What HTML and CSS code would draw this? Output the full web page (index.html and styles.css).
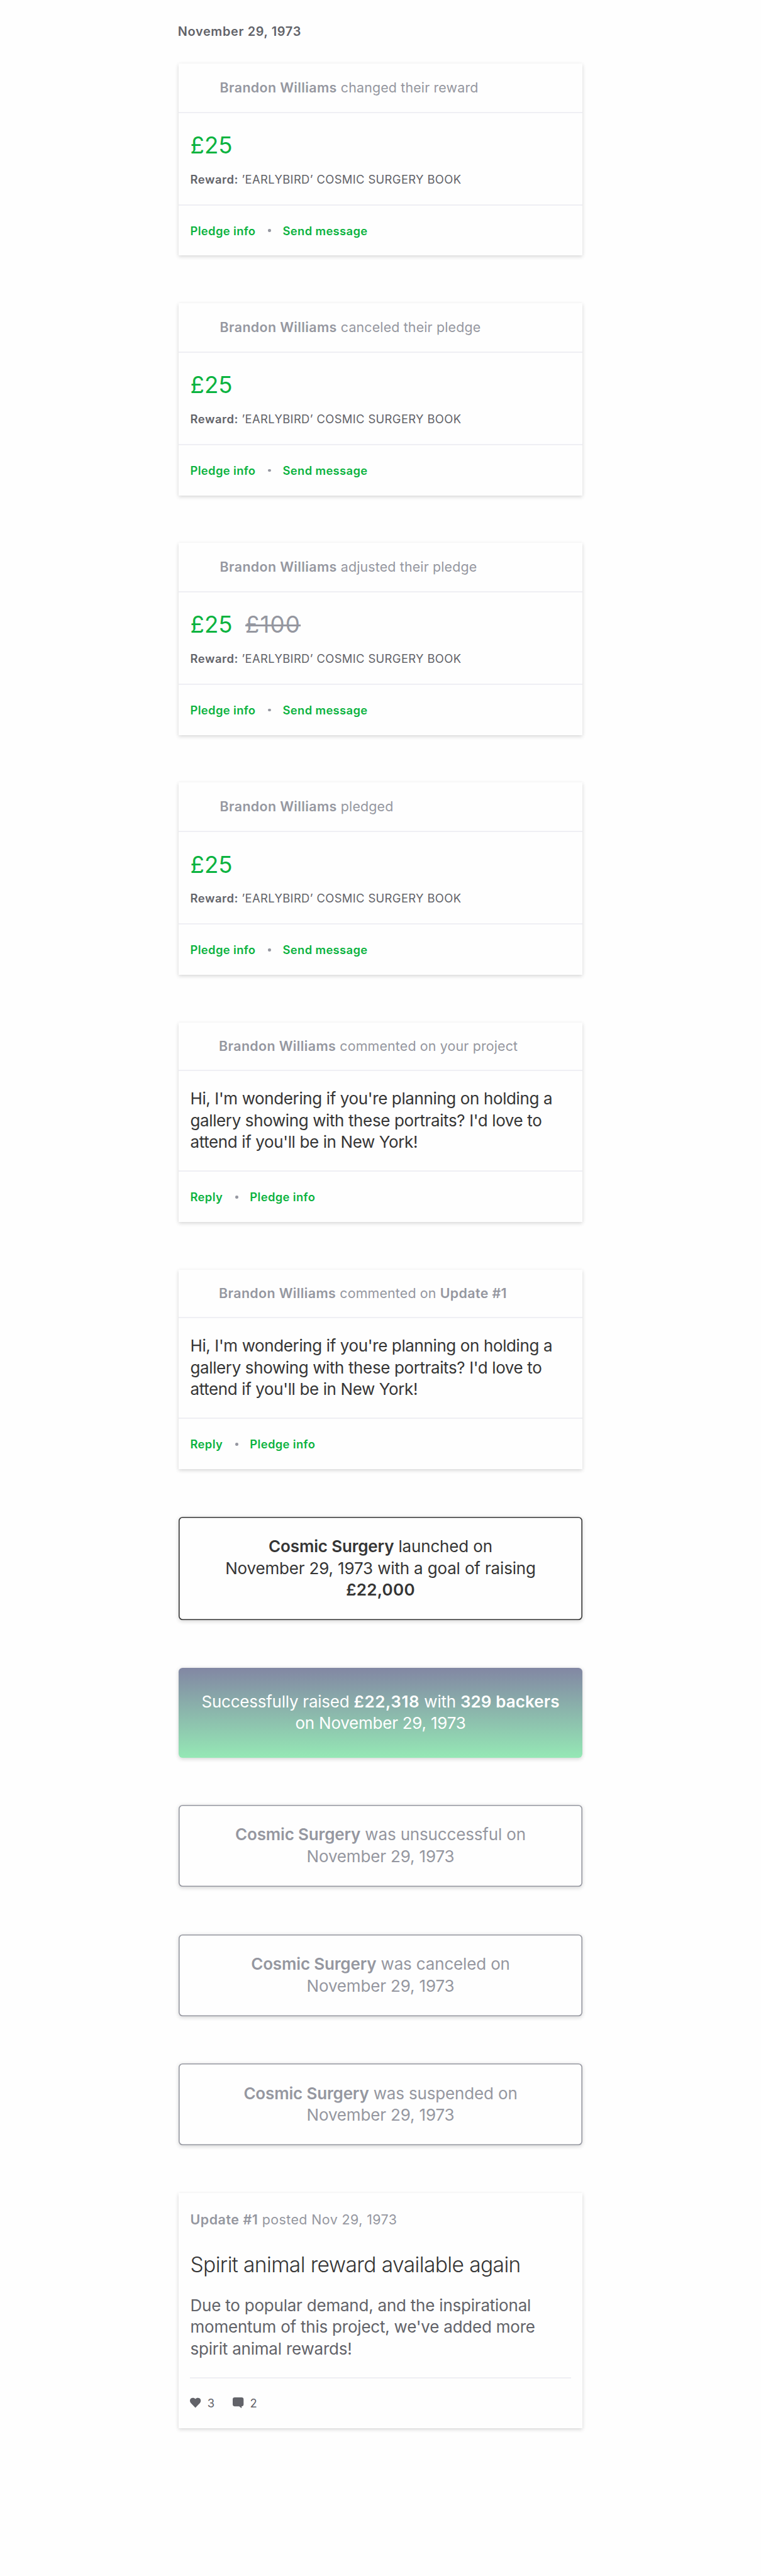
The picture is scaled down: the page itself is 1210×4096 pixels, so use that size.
FILE: index.html
```html
<!DOCTYPE html>
<html lang="en">
<head>
<meta charset="utf-8">
<title>Project activity</title>
<link rel="stylesheet" href="styles.css">
</head>
<body>
<main class="feed">
  <h1 class="date">November 29, 1973</h1>

  <article class="card">
    <header class="card-head"><strong>Brandon Williams</strong> changed their reward</header>
    <div class="pledge">
      <p class="amounts"><span class="amount">£25</span></p>
      <p class="reward"><strong>Reward:</strong> <span>’EARLYBIRD’ COSMIC SURGERY BOOK</span></p>
    </div>
    <footer class="actions"><a>Pledge info</a><i class="dot"></i><a>Send message</a></footer>
  </article>

  <article class="card">
    <header class="card-head"><strong>Brandon Williams</strong> canceled their pledge</header>
    <div class="pledge">
      <p class="amounts"><span class="amount">£25</span></p>
      <p class="reward"><strong>Reward:</strong> <span>’EARLYBIRD’ COSMIC SURGERY BOOK</span></p>
    </div>
    <footer class="actions"><a>Pledge info</a><i class="dot"></i><a>Send message</a></footer>
  </article>

  <article class="card">
    <header class="card-head"><strong>Brandon Williams</strong> adjusted their pledge</header>
    <div class="pledge">
      <p class="amounts"><span class="amount">£25</span><s class="old">£100</s></p>
      <p class="reward"><strong>Reward:</strong> <span>’EARLYBIRD’ COSMIC SURGERY BOOK</span></p>
    </div>
    <footer class="actions"><a>Pledge info</a><i class="dot"></i><a>Send message</a></footer>
  </article>

  <article class="card">
    <header class="card-head"><strong>Brandon Williams</strong> pledged</header>
    <div class="pledge">
      <p class="amounts"><span class="amount">£25</span></p>
      <p class="reward"><strong>Reward:</strong> <span>’EARLYBIRD’ COSMIC SURGERY BOOK</span></p>
    </div>
    <footer class="actions"><a>Pledge info</a><i class="dot"></i><a>Send message</a></footer>
  </article>

  <article class="card">
    <header class="card-head comment-head"><strong>Brandon Williams</strong> commented on your project</header>
    <p class="comment">Hi, I'm wondering if you're planning on holding a<br>gallery showing with these portraits? I'd love to<br>attend if you'll be in New York!</p>
    <footer class="actions"><a>Reply</a><i class="dot"></i><a>Pledge info</a></footer>
  </article>

  <article class="card">
    <header class="card-head comment-head"><strong>Brandon Williams</strong> commented on <strong>Update #1</strong></header>
    <p class="comment">Hi, I'm wondering if you're planning on holding a<br>gallery showing with these portraits? I'd love to<br>attend if you'll be in New York!</p>
    <footer class="actions"><a>Reply</a><i class="dot"></i><a>Pledge info</a></footer>
  </article>

  <article class="notice launched"><strong>Cosmic Surgery</strong> launched on<br>November 29, 1973 with a goal of raising<br><strong class="goal">£22,000</strong></article>
  <article class="notice success">Successfully raised <strong class="raised">£22,318</strong> with <strong class="backers">329 backers</strong><br>on November 29, 1973</article>
  <article class="notice"><strong>Cosmic Surgery</strong> was unsuccessful on<br>November 29, 1973</article>
  <article class="notice"><strong>Cosmic Surgery</strong> was canceled on<br>November 29, 1973</article>
  <article class="notice"><strong>Cosmic Surgery</strong> was suspended on<br>November 29, 1973</article>

  <article class="card update">
    <header class="update-head"><strong>Update #1</strong> posted Nov 29, 1973</header>
    <h2 class="update-title">Spirit animal reward available again</h2>
    <p class="update-text">Due to popular demand, and the inspirational<br>momentum of this project, we've added more<br>spirit animal rewards!</p>
    <footer class="stats">
      <svg class="icon" viewBox="0 0 22 22"><path d="M11 21 1.800 11.500C-.6 8.800-.5 4.500 1.900 2.300 4.500.1 8.700.400 11 3.300 13.300.400 17.500.1 20.100 2.300 22.500 4.500 22.600 8.800 20.200 11.500Z"/></svg><span class="count">3</span>
      <svg class="icon" viewBox="0 0 22 22"><path d="M4 0H18Q22 0 22 4V14Q22 18 18 18V22L13 18H4Q0 18 0 14V4Q0 0 4 0Z"/></svg><span class="count">2</span>
    </footer>
  </article>
</main>
</body>
</html>
```
FILE: styles.css
```css
* { box-sizing: border-box; margin: 0; padding: 0; }

body {
  background: #fefefe;
  font-family: Inter, "Liberation Sans", sans-serif;
  color: #353535;
}

strong { font-weight: 600; }

.feed {
  width: 642.8px;
  height: 4096px;
  margin: 0 auto;
  padding-top: 38.3px;
}

.date {
  margin: 0 0 38.5px -0.8px;
  font-size: 19.9px;
  line-height: 24px;
  font-weight: 600;
  letter-spacing: 0.66px;
  color: #626369;
}

.card {
  margin-bottom: 75.62px;
  background: #fefefe;
  box-shadow: 0 1.6px 6px rgba(0, 0, 0, 0.17);
}

.card-head {
  height: 78.77px;
  padding-left: 66px;
  border-bottom: 2px solid #efeff4;
  font-size: 21.4px;
  line-height: 76.9px;
  letter-spacing: 0.15px;
  color: #9597a0;
  white-space: nowrap;
}
.card-head strong { letter-spacing: 0.37px; }
.comment-head { height: 77.2px; padding-left: 64.5px; line-height: 75.6px; }

.pledge { height: 144.94px; padding: 29.3px 18.9px 0; }
.amounts {
  display: flex;
  gap: 20.5px;
  margin-bottom: 19.9px;
  font-size: 36.7px;
  line-height: 44px;
}
.amount { color: #0bb33f; }
.old { color: #9597a0; letter-spacing: 1.1px; text-decoration-thickness: 3px; }

.reward {
  font-size: 18.4px;
  line-height: 24px;
  letter-spacing: 0.36px;
  color: #626369;
  white-space: nowrap;
}
.reward strong { letter-spacing: 0.55px; }

.actions {
  display: flex;
  align-items: center;
  height: 81.92px;
  padding: 0.5px 18.9px 0;
  border-top: 2px solid #efeff4;
  font-size: 18.4px;
  line-height: 24px;
  font-weight: 600;
  letter-spacing: 0.35px;
  color: #0bb33f;
}
.dot {
  width: 4.7px;
  height: 4.7px;
  margin: 0 18.5px 0 20px;
  border-radius: 50%;
  background: #9597a0;
}

.comment {
  height: 158.33px;
  padding: 27.2px 18.9px 0;
  font-size: 26px;
  line-height: 34.66px;
  letter-spacing: -0.385px;
  white-space: nowrap;
}

.notice {
  margin-bottom: 75.62px;
  height: 129.97px;
  padding-top: 30.3px;
  border-radius: 6.3px;
  background: #fefefe;
  box-shadow: inset 0 0 0 1.6px #9597a0, 0 1.6px 6px rgba(0, 0, 0, 0.17);
  font-size: 26px;
  line-height: 34.66px;
  letter-spacing: -0.16px;
  text-align: center;
  color: #9597a0;
  white-space: nowrap;
}
.launched {
  height: 164.63px;
  box-shadow: inset 0 0 0 1.6px #353535, 0 1.6px 6px rgba(0, 0, 0, 0.17);
  color: #353535;
}
.success {
  height: 142.58px;
  padding-top: 36.7px;
  background: linear-gradient(#8287a3, #95e8b5);
  box-shadow: 0 1.6px 6px rgba(0, 0, 0, 0.17);
  letter-spacing: -0.24px;
  color: #fff;
}
.goal { letter-spacing: 0.26px; }
.raised { letter-spacing: 0.6px; }
.backers { letter-spacing: 0.08px; }

.update { height: 374.2px; margin-bottom: 0; padding: 28.8px 18.9px 0; }
.update-head {
  margin-bottom: 38.3px;
  font-size: 21.4px;
  line-height: 26px;
  letter-spacing: 0.42px;
  color: #9597a0;
}
.update-head strong { letter-spacing: 0.55px; }
.update-title {
  margin-bottom: 26.6px;
  font-size: 33.6px;
  line-height: 42px;
  font-weight: 300;
  letter-spacing: -0.63px;
  white-space: nowrap;
}
.update-text {
  padding-bottom: 27.3px;
  font-size: 26px;
  line-height: 34.66px;
  letter-spacing: -0.22px;
  color: #626369;
  white-space: nowrap;
}
.stats {
  display: flex;
  align-items: center;
  height: 80px;
  border-top: 2px solid #efeff4;
  font-size: 18.4px;
  color: #626369;
}
.icon { width: 17.3px; height: 17.3px; fill: currentColor; }
.count { width: 50.5px; padding-left: 10px; }
```
